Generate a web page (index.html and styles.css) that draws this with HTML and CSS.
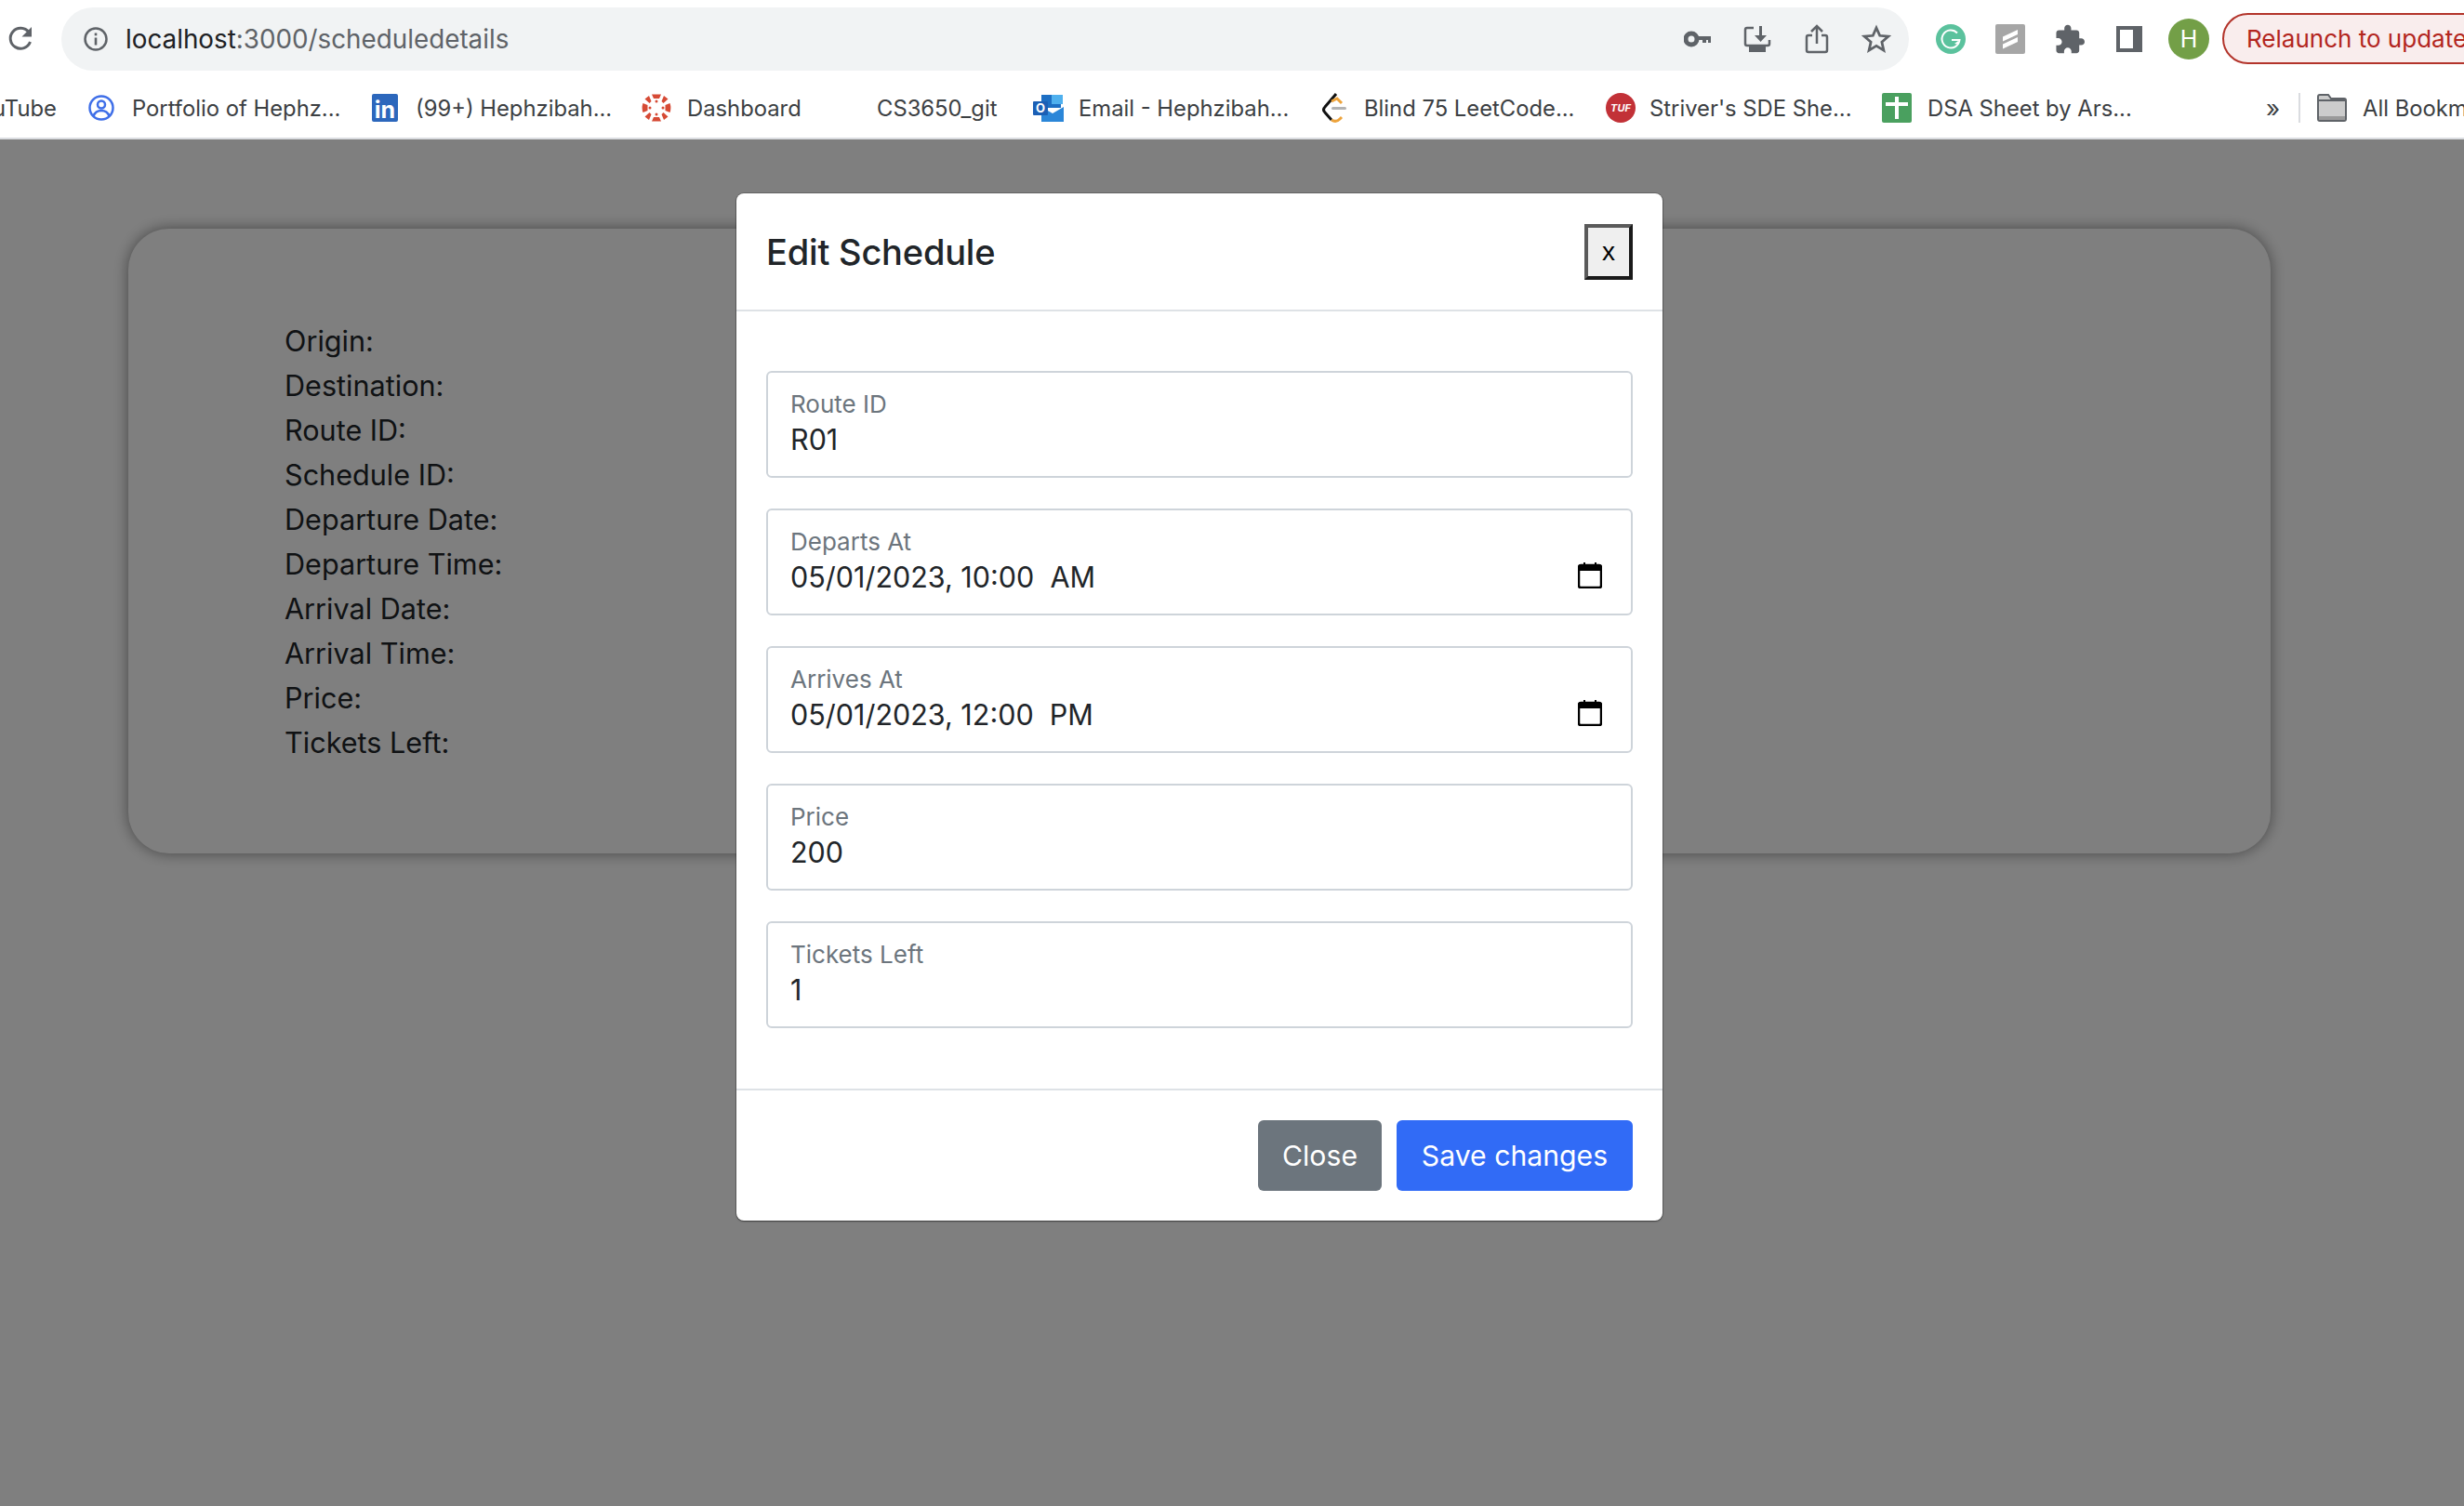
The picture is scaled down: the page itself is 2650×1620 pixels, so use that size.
FILE: index.html
```html
<!DOCTYPE html>
<html lang="en">
<head>
    <meta charset="UTF-8">
    <title>Schedule details</title>
    <link rel="stylesheet" href="styles.css">
</head>
<body>
<!--browser toolbar-->
<div class="toolbar">
    <div class="reload">
        <svg width="30" height="30" viewBox="0 0 30 30"><path d="M24.500 19a11 11 0 1 1-1.600-10.500" fill="none" stroke="#5f6368" stroke-width="3"/><path d="M26 3v10.500H15.500z" fill="#5f6368"/></svg>
    </div>
    <div class="address">
        <svg class="info" width="28" height="28" viewBox="0 0 28 28"><circle cx="14" cy="14" r="11.500" fill="none" stroke="#5f6368" stroke-width="2.500"/><rect x="12.700" y="12.500" width="2.600" height="8" fill="#5f6368"/><rect x="12.700" y="7.500" width="2.600" height="2.800" fill="#5f6368"/></svg>
        <div class="url"><span class="host">localhost</span>:3000/scheduledetails</div>
        <div class="addr-icons">
            <span class="tool-icon"><svg width="30" height="20" viewBox="0 0 30 20"><circle cx="8" cy="10" r="6" fill="none" stroke="#5f6368" stroke-width="5"/><path d="M13 7h16v7h-3v-3h-2v3h-4v-3h-7z" fill="#5f6368"/></svg></span>
            <span class="tool-icon"><svg width="30" height="30" viewBox="0 0 30 30"><path d="M11 3H4a2 2 0 0 0-2 2v15a2 2 0 0 0 2 2h22a2 2 0 0 0 2-2v-4" fill="none" stroke="#5f6368" stroke-width="2.500"/><path d="M17 1h3v10h5l-6.500 7-6.500-7h5z" fill="#5f6368"/><rect x="6" y="23" width="18" height="6" fill="#5f6368"/></svg></span>
            <span class="tool-icon"><svg width="26" height="32" viewBox="0 0 26 32"><path d="M8 12H4a2 2 0 0 0-2 2v14a2 2 0 0 0 2 2h18a2 2 0 0 0 2-2V14a2 2 0 0 0-2-2h-4" fill="none" stroke="#5f6368" stroke-width="2.500"/><path d="M13 21V3M7 8l6-6 6 6" fill="none" stroke="#5f6368" stroke-width="2.500"/></svg></span>
            <span class="tool-icon"><svg width="32" height="32" viewBox="0 0 32 32"><path d="M16 4l3.700 8.300 9 .9-6.800 6 2 8.900L16 23.400 8.100 28.100l2-8.900-6.800-6 9-.9z" fill="none" stroke="#5f6368" stroke-width="2.800"/></svg></span>
        </div>
    </div>
    <div class="ext-icons">
        <span class="tool-icon"><svg width="32" height="32" viewBox="0 0 32 32"><circle cx="16" cy="16" r="16" fill="#5bc29d"/><path d="M23 9.500a9.500 9.500 0 1 0 2.500 7.500H17" fill="none" stroke="#fff" stroke-width="2"/><path d="M25 22l-5-1 4-3z" fill="#fff"/></svg></span>
        <span class="tool-icon"><svg width="32" height="32" viewBox="0 0 32 32"><rect width="32" height="32" rx="2" fill="#a6a6a6"/><path d="M8 13.500L24 6v5L8 18.500zM8 21.500L24 14v5L8 26.500z" fill="#fff"/></svg></span>
        <span class="tool-icon"><svg width="32" height="32" viewBox="1 0.500 22 22"><path d="M20.500 11H19V7c0-1.100-.9-2-2-2h-4V3.500C13 2.120 11.880 1 10.500 1S8 2.120 8 3.500V5H4c-1.100 0-1.990.9-1.990 2v3.800H3.500c1.490 0 2.700 1.210 2.700 2.700s-1.210 2.700-2.700 2.700H2V20c0 1.100.9 2 2 2h3.800v-1.500c0-1.490 1.210-2.700 2.700-2.700 1.490 0 2.700 1.210 2.700 2.700V22H17c1.100 0 2-.9 2-2v-4h1.500c1.380 0 2.500-1.120 2.500-2.500S21.880 11 20.500 11z" fill="#5f6368"/></svg></span>
        <span class="tool-icon"><svg width="28" height="28" viewBox="0 0 28 28"><rect width="28" height="28" fill="#5f6368"/><rect x="4" y="4" width="14" height="20" fill="#fff"/></svg></span>
        <span class="tool-icon"><span class="avatar">H</span></span>
    </div>
    <div class="relaunch">Relaunch to update</div>
</div>
<!--bookmarks-->
<div class="bookmarks">
    <div class="bm bm-first">YouTube</div>
    <div class="bm">
        <span class="bm-icon"><svg width="28" height="30" viewBox="0 0 28 30"><circle cx="14" cy="15" r="12.500" fill="none" stroke="#3f6fe8" stroke-width="2.500"/><circle cx="14" cy="11.500" r="4" fill="none" stroke="#3f6fe8" stroke-width="2.500"/><path d="M5.500 24c1.500-4.500 4.500-6 8.500-6s7 1.500 8.500 6" fill="none" stroke="#3f6fe8" stroke-width="2.500"/></svg></span>
        <span class="bm-text">Portfolio of Hephz...</span>
    </div>
    <div class="bm">
        <span class="bm-icon"><span class="linkedin">in</span></span>
        <span class="bm-text">(99+) Hephzibah...</span>
    </div>
    <div class="bm">
        <span class="bm-icon bm-wide"><svg width="32" height="32" viewBox="0 0 32 32"><g fill="#d64a35"><path d="M11 1.500h10l-2 4.500h-6zM11 30.500h10l-2-4.500h-6zM1.500 11l5 2v6l-5 2a15 15 0 0 1 0-10zM30.500 11l-5 2v6l5 2a15 15 0 0 0 0-10zM3.500 6.500L8 3l2.500 6-2 2zM28.500 6.500L24 3l-2.500 6 2 2zM3.500 25.500L8 29l2.500-6-2-2zM28.500 25.500L24 29l-2.500-6 2-2z"/><circle cx="16" cy="9" r="1.500"/><circle cx="16" cy="23" r="1.500"/><circle cx="9" cy="16" r="1.500"/><circle cx="23" cy="16" r="1.500"/></g></svg></span>
        <span class="bm-text">Dashboard</span>
    </div>
    <div class="bm"><span class="bm-icon"></span><span class="bm-text bm-nudge">CS3650_git</span></div>
    <div class="bm">
        <span class="bm-icon bm-wide"><svg width="33" height="30" viewBox="0 0 33 30"><rect x="9" y="1" width="21" height="14" fill="#1d6fc4"/><rect x="20" y="1" width="12" height="10" fill="#4fb0ee"/><path d="M9 14l12 7 12-7v16H9z" fill="#2b86d8"/><rect x="0" y="8" width="16" height="15" rx="1" fill="#1b5fb5"/><text class="outlook-o" x="8" y="20">O</text></svg></span>
        <span class="bm-text">Email - Hephzibah...</span>
    </div>
    <div class="bm">
        <span class="bm-icon bm-tight"><svg width="28" height="32" viewBox="0 0 28 32"><path d="M16 1L4 15c-2 2-2 4 0 6l7 8" fill="none" stroke="#111" stroke-width="3"/><path d="M11 9l6-3 5 5M11 29c3 2 6 2 9-1l2-2" fill="none" stroke="#eda33b" stroke-width="3"/><rect x="11" y="15" width="16" height="3" rx="1.500" fill="#b3b3b3"/></svg></span>
        <span class="bm-text">Blind 75 LeetCode...</span>
    </div>
    <div class="bm">
        <span class="bm-icon"><span class="tuf">TUF</span></span>
        <span class="bm-text">Striver's SDE She...</span>
    </div>
    <div class="bm">
        <span class="bm-icon bm-wide"><svg width="32" height="32" viewBox="0 0 32 32"><rect width="32" height="32" rx="2" fill="#4aa05f"/><rect x="14" y="4" width="4" height="24" fill="#fff"/><rect x="4" y="10" width="24" height="4" fill="#fff"/></svg></span>
        <span class="bm-text">DSA Sheet by Ars...</span>
    </div>
    <div class="bm bm-more">»</div>
    <div class="bm-sep"></div>
    <div class="bm">
        <span class="bm-icon bm-wide"><svg width="32" height="30" viewBox="0 0 32 30"><path d="M1 3a2 2 0 0 1 2-2h9l3 4h14a2 2 0 0 1 2 2v20a2 2 0 0 1-2 2H3a2 2 0 0 1-2-2z" fill="#ccc" stroke="#5f6368" stroke-width="2"/><rect x="2" y="24" width="28" height="4" fill="#9a9a9a"/><path d="M2 7h28" stroke="#5f6368" stroke-width="2"/></svg></span>
        <span class="bm-text">All Bookmarks</span>
    </div>
</div>
<!--page content-->
<div class="page">
    <div class="card">
        <div class="info-line">Origin:</div>
        <div class="info-line">Destination:</div>
        <div class="info-line">Route ID:</div>
        <div class="info-line">Schedule ID:</div>
        <div class="info-line">Departure Date:</div>
        <div class="info-line">Departure Time:</div>
        <div class="info-line">Arrival Date:</div>
        <div class="info-line">Arrival Time:</div>
        <div class="info-line">Price:</div>
        <div class="info-line">Tickets Left:</div>
    </div>
    <div class="backdrop">
        <div class="modal">
            <div class="modal-header">
                <div class="modal-title">Edit Schedule</div>
                <div class="btn-x">x</div>
            </div>
            <div class="modal-body">
                <div class="field">
                    <div class="field-text">
                        <div class="field-label">Route ID</div>
                        <div class="field-value">R01</div>
                    </div>
                </div>
                <div class="field">
                    <div class="field-text">
                        <div class="field-label">Departs At</div>
                        <div class="field-value">05/01/2023, 10:00&nbsp; AM</div>
                    </div>
                    <svg class="cal" width="26" height="28" viewBox="0 0 26 28"><path d="M6 0h2v4H6zM18 0h2v4h-2z" fill="#000"/><rect x="1" y="3" width="24" height="24" rx="2" fill="none" stroke="#000" stroke-width="2.500"/><rect x="1" y="3" width="24" height="6" fill="#000"/></svg>
                </div>
                <div class="field">
                    <div class="field-text">
                        <div class="field-label">Arrives At</div>
                        <div class="field-value">05/01/2023, 12:00&nbsp; PM</div>
                    </div>
                    <svg class="cal" width="26" height="28" viewBox="0 0 26 28"><path d="M6 0h2v4H6zM18 0h2v4h-2z" fill="#000"/><rect x="1" y="3" width="24" height="24" rx="2" fill="none" stroke="#000" stroke-width="2.500"/><rect x="1" y="3" width="24" height="6" fill="#000"/></svg>
                </div>
                <div class="field">
                    <div class="field-text">
                        <div class="field-label">Price</div>
                        <div class="field-value">200</div>
                    </div>
                </div>
                <div class="field">
                    <div class="field-text">
                        <div class="field-label">Tickets Left</div>
                        <div class="field-value">1</div>
                    </div>
                </div>
            </div>
            <div class="modal-footer">
                <div class="btn btn-close">Close</div>
                <div class="btn btn-save">Save changes</div>
            </div>
        </div>
    </div>
</div>
</body>
</html>
```

FILE: styles.css
```css
html, body{
    margin: 0;
    height: 100%;
    overflow: hidden;
}
body{
    display: flex;
    flex-direction: column;
    font-family: Inter, "Liberation Sans", sans-serif;
    background-color: white;
}
/* toolbar */
.toolbar{
    display: flex;
    height: 84px;
    flex: none;
    overflow: hidden;
}
.reload{
    width: 66px;
    flex: none;
    padding: 26px 0 0 8px;
    box-sizing: border-box;
}
.address{
    display: flex;
    align-items: center;
    width: 1987px;
    height: 68px;
    margin-top: 8px;
    flex: none;
    padding: 0 3px 0 23px;
    box-sizing: border-box;
    border-radius: 34px;
    background-color: #f1f3f4;
}
.info{
    flex: none;
}
.url{
    margin-left: 18px;
    font-size: 27.800px;
    color: #5f6368;
}
.host{
    color: #202124;
}
.addr-icons{
    display: flex;
    margin-left: auto;
}
.tool-icon{
    display: flex;
    align-items: center;
    justify-content: center;
    width: 64px;
    height: 44px;
    flex: none;
}
.ext-icons{
    display: flex;
    flex: none;
    height: 44px;
    margin: 20px 4px 0 13px;
}
.avatar{
    display: flex;
    align-items: center;
    justify-content: center;
    width: 44px;
    height: 44px;
    border-radius: 50%;
    background-color: #739f47;
    color: white;
    font-size: 25px;
}
.relaunch{
    height: 55px;
    margin-top: 14px;
    flex: none;
    padding: 0 40px 0 24px;
    box-sizing: border-box;
    border: 2.500px solid #b3342b;
    border-radius: 28px;
    background-color: #f9eded;
    color: #b3261e;
    font-size: 26px;
    line-height: 52px;
    white-space: nowrap;
}
/* bookmarks */
.bookmarks{
    display: grid;
    grid-template-columns: 95px 305px 290px 253px 168px 310px 306px 297px 413px 35px 20px 200px;
    align-items: center;
    height: 64px;
    flex: none;
    border-bottom: 2px solid #dadce0;
    overflow: hidden;
    font-size: 23.800px;
    color: #3c4043;
}
.bm{
    display: flex;
    align-items: center;
    white-space: nowrap;
}
.bm-first{
    justify-content: flex-end;
    width: 61px;
    overflow: hidden;
}
.bm-icon{
    display: flex;
    align-items: center;
    width: 33px;
    height: 32px;
    margin-right: 14px;
    flex: none;
}
.bm-wide{
    margin-right: 16px;
}
.bm-tight{
    margin-right: 13px;
}
.bm-nudge{
    margin-left: -47px;
}
.bm-more{
    font-size: 26px;
}
.bm-sep{
    width: 2px;
    height: 32px;
    background-color: #dadce0;
}
.linkedin{
    width: 28px;
    height: 30px;
    border-radius: 2px;
    background-color: #2c67bc;
    color: white;
    font-weight: 700;
    font-size: 25px;
    line-height: 34px;
    text-align: center;
}
.tuf{
    width: 32px;
    height: 32px;
    border-radius: 50%;
    background-color: #c23137;
    color: white;
    font-style: italic;
    font-weight: 700;
    font-size: 11px;
    line-height: 32px;
    text-align: center;
}
.outlook-o{
    font-family: Inter, sans-serif;
    font-weight: 700;
    font-size: 13px;
    fill: white;
    text-anchor: middle;
}
/* page */
.page{
    position: relative;
    flex: 1;
    padding: 96px 208px 0 138px;
    overflow: hidden;
}
.card{
    padding: 97px 0 95px 168px;
    border-radius: 44px;
    box-shadow: 0 0 16px rgba(0,0,0,0.45);
    font-size: 30.600px;
    line-height: 48px;
    color: #212529;
}
.backdrop{
    position: absolute;
    top: 0;
    left: 0;
    right: 0;
    bottom: 0;
    padding: 58px 0 0 792px;
    background-color: rgba(0,0,0,0.5);
}
.modal{
    width: 996px;
    box-sizing: border-box;
    border-radius: 8px;
    background-color: white;
    box-shadow: 0 0 0 1px rgba(0,0,0,0.2), 0 1px 2px rgba(0,0,0,0.4);
    color: #212529;
}
.modal-header{
    display: flex;
    align-items: center;
    justify-content: space-between;
    height: 127px;
    padding: 0 32px;
    box-sizing: border-box;
    border-bottom: 2px solid #dee2e6;
}
.modal-title{
    font-weight: 500;
    font-size: 38px;
    letter-spacing: -0.2px;
}
.btn-x{
    width: 52px;
    height: 60px;
    box-sizing: border-box;
    border: 4px solid;
    border-color: #5a5a5a #1a1a1a #1a1a1a #5a5a5a;
    background-color: #efefef;
    color: #000;
    font-family: "Liberation Sans", sans-serif;
    font-size: 28px;
    line-height: 52px;
    text-align: center;
}
.modal-body{
    display: flex;
    flex-direction: column;
    gap: 33px;
    padding: 64px 32px 65px;
}
.field{
    display: flex;
    align-items: flex-start;
    justify-content: space-between;
    height: 115px;
    padding: 0 31px 0 24px;
    box-sizing: border-box;
    border: 2px solid #ced4da;
    border-radius: 6px;
}
.field-text{
    padding-top: 18px;
}
.field-label{
    height: 32px;
    font-size: 26px;
    line-height: 32px;
    color: #6c757d;
}
.field-value{
    height: 44px;
    font-size: 30.500px;
    line-height: 44px;
    color: #212529;
}
.cal{
    margin-top: 56px;
}
.modal-footer{
    display: flex;
    justify-content: flex-end;
    gap: 16px;
    padding: 32px;
    border-top: 2px solid #dee2e6;
}
.btn{
    height: 76px;
    box-sizing: border-box;
    border-radius: 6px;
    color: white;
    font-size: 30.200px;
    line-height: 76px;
    text-align: center;
}
.btn-close{
    width: 133px;
    background-color: #6c757d;
}
.btn-save{
    width: 254px;
    background-color: #316bf6;
}
```
